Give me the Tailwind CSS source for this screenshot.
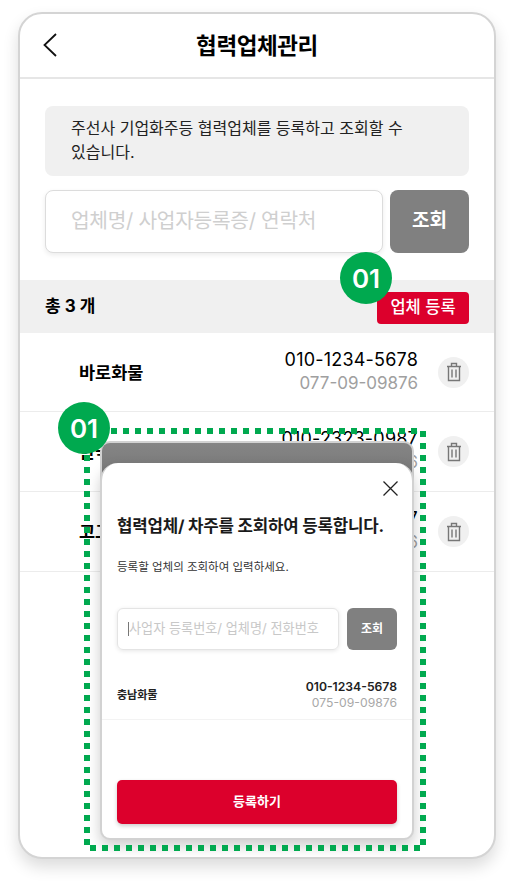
<!DOCTYPE html>
<html lang="ko">
<head>
<meta charset="utf-8">
<script src="https://cdn.jsdelivr.net/npm/@tailwindcss/browser@4"></script>
</head>
<body class="bg-white">
<div class="w-[514px] h-[884px] pt-[12px] pl-[18px] font-['Inter','Noto_Sans_CJK_KR',sans-serif] text-black overflow-hidden">
  <div class="relative w-[478px] h-[847px] bg-white rounded-[24px] border-2 border-[#d4d4d4] shadow-[0_8px_16px_rgba(0,0,0,0.14)]">
    <!-- header -->
    <header class="h-[65px] relative flex items-center justify-center border-b-2 border-[#e6e6e6]">
      <svg class="absolute left-[22px] top-[18px]" width="16" height="26" viewBox="0 0 16 26" fill="none"><path d="M14 2 L2.5 13 L14 24" stroke="#111" stroke-width="1.8"/></svg>
      <h1 class="text-[22.5px] font-bold tracking-[-0.4px] mt-[1px]">협력업체관리</h1>
    </header>
    <!-- info -->
    <div class="mx-[25px] mt-[27px] h-[70px] bg-[#f0f0f0] rounded-[8px] pl-[26px] pr-[55px] pt-[10px] text-[16px] leading-[24px] text-[#222]">주선사 기업화주등 협력업체를 등록하고 조회할 수 있습니다.</div>
    <!-- search -->
    <div class="mx-[25px] mt-[14px] flex gap-[7px]">
      <div class="w-[339px] h-[63px] bg-white border border-[#dcdcdc] rounded-[8px] shadow-[0_2px_5px_rgba(0,0,0,0.08)] flex items-center pl-[25px] text-[20.3px] text-[#cfcfcf] tracking-[-0.3px]">업체명/ 사업자등록증/ 연락처</div>
      <div class="w-[79px] h-[63px] bg-[#808080] rounded-[8px] flex items-center justify-center text-white font-bold text-[19px]">조회</div>
    </div>
    <!-- total bar -->
    <div class="mt-[27px] h-[53px] bg-[#f0f0f0] flex items-center justify-between pl-[25px] pr-[25px]">
      <span class="text-[17px] font-bold">총 3 개</span>
      <span class="w-[92px] h-[32px] mt-[2px] bg-[#dc002c] rounded-[4px] flex items-center justify-center text-white text-[16.5px] font-medium">업체 등록</span>
    </div>
    <!-- rows -->
    <div class="h-[79px] border-b border-[#ececec] flex items-center pl-[59px] pr-[25px]">
      <span class="flex-1 text-[17.5px] font-bold mt-[2px]">바로화물</span>
      <div class="text-right mr-[20px] mt-[-3px]"><div class="text-[18px] leading-[25px] tracking-[0.2px]">010-1234-5678</div><div class="text-[17px] leading-[23px] text-[#a0a0a0]">077-09-09876</div></div>
      <span class="w-[31px] h-[31px] rounded-full bg-[#f0f0f0] flex items-center justify-center"><svg width="16" height="20" viewBox="0 0 16 20" fill="none" stroke="#777" stroke-width="1.4"><path d="M1 4.5H15M5.5 4.5V1.5H10.5V4.5M2.5 4.5V18.5H13.5V4.5M6 7.5V15.5M10 7.5V15.5"/></svg></span>
    </div>
    <div class="h-[80px] border-b border-[#ececec] flex items-center pl-[59px] pr-[25px]">
      <span class="flex-1 text-[17.5px] font-bold mt-[2px]">한국화물</span>
      <div class="text-right mr-[20px] mt-[-3px]"><div class="text-[18px] leading-[25px] tracking-[0.2px]">010-2323-0987</div><div class="text-[17px] leading-[23px] text-[#a0a0a0]">077-09-09876</div></div>
      <span class="w-[31px] h-[31px] rounded-full bg-[#f0f0f0] flex items-center justify-center"><svg width="16" height="20" viewBox="0 0 16 20" fill="none" stroke="#777" stroke-width="1.4"><path d="M1 4.5H15M5.5 4.5V1.5H10.5V4.5M2.5 4.5V18.5H13.5V4.5M6 7.5V15.5M10 7.5V15.5"/></svg></span>
    </div>
    <div class="h-[80px] border-b border-[#ececec] flex items-center pl-[59px] pr-[25px]">
      <span class="flex-1 text-[17.5px] font-bold mt-[2px]">고고화물</span>
      <div class="text-right mr-[20px] mt-[-3px]"><div class="text-[18px] leading-[25px] tracking-[0.2px]">010-2323-0987</div><div class="text-[17px] leading-[23px] text-[#a0a0a0]">077-09-09876</div></div>
      <span class="w-[31px] h-[31px] rounded-full bg-[#f0f0f0] flex items-center justify-center"><svg width="16" height="20" viewBox="0 0 16 20" fill="none" stroke="#777" stroke-width="1.4"><path d="M1 4.5H15M5.5 4.5V1.5H10.5V4.5M2.5 4.5V18.5H13.5V4.5M6 7.5V15.5M10 7.5V15.5"/></svg></span>
    </div>

    <!-- modal overlay -->
    <div class="absolute left-[80px] top-[427px] w-[314px] h-[60px] rounded-t-[10px] bg-gradient-to-b from-[#858585] to-[#6e6e6e] border-2 border-[#d2d2d2] border-b-0"></div>
    <div class="absolute left-[80px] top-[449px] w-[314px] h-[377px] bg-white rounded-t-[18px] rounded-b-[10px] border-2 border-t-0 border-[#d2d2d2] shadow-[0_6px_14px_rgba(0,0,0,0.2)]">
      <svg class="absolute left-[281px] top-[18px]" width="15" height="15" viewBox="0 0 15 15" fill="none" stroke="#222" stroke-width="1.3"><path d="M0.5 0.5L14.5 14.5M14.5 0.5L0.5 14.5"/></svg>
      <p class="absolute left-[15px] top-[51px] text-[16.8px] font-bold whitespace-nowrap tracking-[-0.2px] text-[#1a1a1a]">협력업체/ 차주를 조회하여 등록합니다.</p>
      <p class="absolute left-[15px] top-[96px] text-[11.5px] whitespace-nowrap text-[#333]">등록할 업체의 조회하여 입력하세요.</p>
      <div class="absolute left-[15px] right-[15px] top-[145px] flex justify-between">
        <div class="w-[222px] h-[42px] border border-[#e4e4e4] rounded-[6px] shadow-[0_1px_4px_rgba(0,0,0,0.1)] flex items-center pl-[10px] text-[13.15px] text-[#c8c8c8] whitespace-nowrap"><span class="w-px h-[14px] bg-[#777]"></span>사업자 등록번호/ 업체명/ 전화번호</div>
        <div class="w-[50px] h-[42px] bg-[#808080] rounded-[6px] flex items-center justify-center text-white text-[12px] font-bold">조회</div>
      </div>
      <div class="absolute left-0 right-0 top-[208px] h-[49px] border-b border-[#f3f3f3] flex items-center justify-between px-[15px]">
        <span class="text-[11px] font-bold text-[#222]">충남화물</span>
        <div class="text-right"><div class="text-[12.2px] leading-[16px] font-semibold text-[#222]">010-1234-5678</div><div class="text-[12.2px] leading-[16px] text-[#a8a8a8]">075-09-09876</div></div>
      </div>
      <div class="absolute left-[15px] right-[15px] top-[317px] h-[44px] bg-[#dc002c] rounded-[5px] shadow-[0_2px_4px_rgba(0,0,0,0.2)] flex items-center justify-center text-white text-[13px] font-bold">등록하기</div>
    </div>

    <!-- dashed outline -->
    <svg class="absolute left-[64px] top-[414px]" width="342" height="423" viewBox="0 0 342 423" fill="none"><rect x="3" y="3" width="336" height="417" stroke="#00a94f" stroke-width="6" stroke-dasharray="6 6"/></svg>
    <!-- badges -->
    <span class="absolute left-[38px] top-[388px] w-[52px] h-[52px] rounded-full bg-[#00a94f] flex items-center justify-center text-white text-[26px] font-semibold">01</span>
    <span class="absolute left-[320px] top-[238px] w-[52px] h-[52px] rounded-full bg-[#00a94f] flex items-center justify-center text-white text-[26px] font-semibold">01</span>
  </div>
</div>
</body>
</html>
